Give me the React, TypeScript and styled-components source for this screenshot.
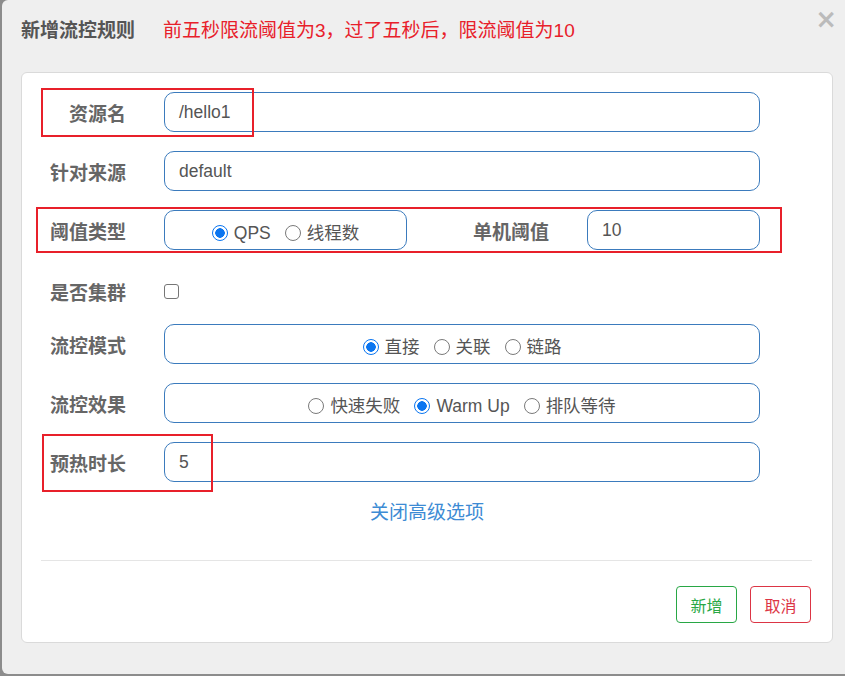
import * as React from 'react'
import styled, { createGlobalStyle } from 'styled-components'

const FONT = `"Liberation Sans", "Noto Sans CJK SC", sans-serif`

const COLORS = {
  page: '#8c8c8c',
  modal: '#efefef',
  label: '#666',
  text: '#555',
  inputBorder: '#3b7bbd',
  note: '#e8202a',
  link: '#3d8bd4',
  radio: '#0a75f0',
  green: '#28a745',
  red: '#dc3545',
}

const GlobalStyle = createGlobalStyle`
  html, body {
    margin: 0;
    padding: 0;
    background: ${COLORS.page};
    font-family: ${FONT};
  }
  * { box-sizing: border-box; }
`

const Modal = styled.div`
  position: relative;
  margin-left: 2px;
  width: 843px;
  height: 674px;
  background: ${COLORS.modal};
  border-radius: 6px 0 0 6px;
  padding: 0 12px 0 19px;
  display: flex;
  flex-direction: column;
`

const Header = styled.div`
  height: 62px;
  display: flex;
  align-items: center;
  margin-bottom: 10px;
`

const Title = styled.h4`
  margin: 0;
  font-size: 19px;
  font-weight: bold;
  color: #555;
  line-height: 24px;
`

const Note = styled.span`
  margin-left: 28px;
  font-size: 19px;
  color: ${COLORS.note};
  line-height: 24px;
`

const Close = styled.span`
  position: absolute;
  top: 5px;
  right: 8px;
  font-size: 26px;
  font-weight: bold;
  color: #bbb;
  line-height: 28px;
  font-family: "DejaVu Sans", sans-serif;
`

const Card = styled.div`
  background: #fff;
  border: 1px solid #dadada;
  border-radius: 6px;
  padding: 19px 20px 19px 0;
`

const Form = styled.div`
  display: flex;
  flex-direction: column;
  gap: 19px;
  margin-right: 52px;
`

const Row = styled.div<{ $short?: boolean }>`
  display: flex;
  align-items: center;
  height: ${(p) => (p.$short ? '36px' : '40px')};
  padding-top: ${(p) => (p.$short ? '8px' : '0')};
`

const Label = styled.div<{ $width?: number }>`
  width: ${(p) => p.$width ?? 142}px;
  flex: none;
  padding: 5px 38px 0 0;
  text-align: right;
  font-size: 19px;
  font-weight: bold;
  color: ${COLORS.label};
  line-height: 24px;
`

const TextInput = styled.div<{ $width?: number }>`
  flex: ${(p) => (p.$width ? 'none' : '1')};
  width: ${(p) => (p.$width ? `${p.$width}px` : 'auto')};
  height: 40px;
  border: 1px solid ${COLORS.inputBorder};
  border-radius: 10px;
  padding-left: 14px;
  display: flex;
  align-items: center;
  font-size: 17.5px;
  color: ${COLORS.text};
`

const RadioBox = styled.div<{ $width?: number }>`
  flex: ${(p) => (p.$width ? 'none' : '1')};
  width: ${(p) => (p.$width ? `${p.$width}px` : 'auto')};
  height: 40px;
  border: 1px solid ${COLORS.inputBorder};
  border-radius: 10px;
  padding-top: 5px;
  display: flex;
  align-items: center;
  justify-content: center;
  gap: 14px;
`

const RadioOption = styled.label`
  display: inline-flex;
  align-items: center;
  gap: 6px;
  font-size: 17.5px;
  color: ${COLORS.text};
  line-height: 22px;
`

const Radio = styled.input.attrs({ type: 'radio' })`
  appearance: none;
  width: 16px;
  height: 16px;
  margin: 0;
  border-radius: 50%;
  border: 1px solid #7a7a7a;
  background: #fff;
  &:checked {
    border: 1.5px solid ${COLORS.radio};
    background: radial-gradient(circle, ${COLORS.radio} 0 4.5px, #fff 5px);
  }
`

const Checkbox = styled.input.attrs({ type: 'checkbox' })`
  appearance: none;
  width: 15px;
  height: 15px;
  margin: 0 0 0 0;
  border: 1px solid #767676;
  border-radius: 3px;
  background: #fff;
`

const LinkRow = styled.div`
  margin-top: 19px;
  padding-left: 20px;
  text-align: center;
  font-size: 19px;
  line-height: 24px;
  color: ${COLORS.link};
`

const Divider = styled.hr`
  margin: 35px 0 25px 19px;
  border: 0;
  border-top: 1px solid #e5e5e5;
`

const Footer = styled.div`
  display: flex;
  justify-content: flex-end;
  gap: 13px;
  padding-right: 1px;
`

const Button = styled.button<{ $color: string }>`
  width: 61px;
  height: 37px;
  background: #fff;
  border: 1px solid ${(p) => p.$color};
  border-radius: 4px;
  color: ${(p) => p.$color};
  font-family: ${FONT};
  font-size: 16px;
  padding: 0;
`

const Mark = styled.div`
  position: absolute;
  border: 2px solid ${COLORS.note};
  pointer-events: none;
`

const Options = ({ items, checked }: { items: string[]; checked: number }): JSX.Element => (
  <>
    {items.map((item, i) => (
      <RadioOption key={item}>
        <Radio readOnly checked={i === checked} />
        {item}
      </RadioOption>
    ))}
  </>
)

export default function App(): JSX.Element {
  return (
    <>
      <GlobalStyle />
      <Modal>
        <Header>
          <Title>新增流控规则</Title>
          <Note>前五秒限流阈值为3，过了五秒后，限流阈值为10</Note>
        </Header>
        <Close>×</Close>
        <Card>
          <Form>
            <Row>
              <Label>资源名</Label>
              <TextInput>/hello1</TextInput>
            </Row>
            <Row>
              <Label>针对来源</Label>
              <TextInput>default</TextInput>
            </Row>
            <Row>
              <Label>阈值类型</Label>
              <RadioBox $width={243}>
                <Options items={['QPS', '线程数']} checked={0} />
              </RadioBox>
              <Label $width={180}>单机阈值</Label>
              <TextInput>10</TextInput>
            </Row>
            <Row $short>
              <Label>是否集群</Label>
              <Checkbox />
            </Row>
            <Row>
              <Label>流控模式</Label>
              <RadioBox>
                <Options items={['直接', '关联', '链路']} checked={0} />
              </RadioBox>
            </Row>
            <Row>
              <Label>流控效果</Label>
              <RadioBox>
                <Options items={['快速失败', 'Warm Up', '排队等待']} checked={1} />
              </RadioBox>
            </Row>
            <Row>
              <Label>预热时长</Label>
              <TextInput>5</TextInput>
            </Row>
          </Form>
          <LinkRow>关闭高级选项</LinkRow>
          <Divider />
          <Footer>
            <Button $color={COLORS.green}>新增</Button>
            <Button $color={COLORS.red}>取消</Button>
          </Footer>
        </Card>
        <Mark style={{ left: 39, top: 88, width: 213, height: 49 }} />
        <Mark style={{ left: 34, top: 207, width: 746, height: 46 }} />
        <Mark style={{ left: 40, top: 434, width: 171, height: 58 }} />
      </Modal>
    </>
  )
}
